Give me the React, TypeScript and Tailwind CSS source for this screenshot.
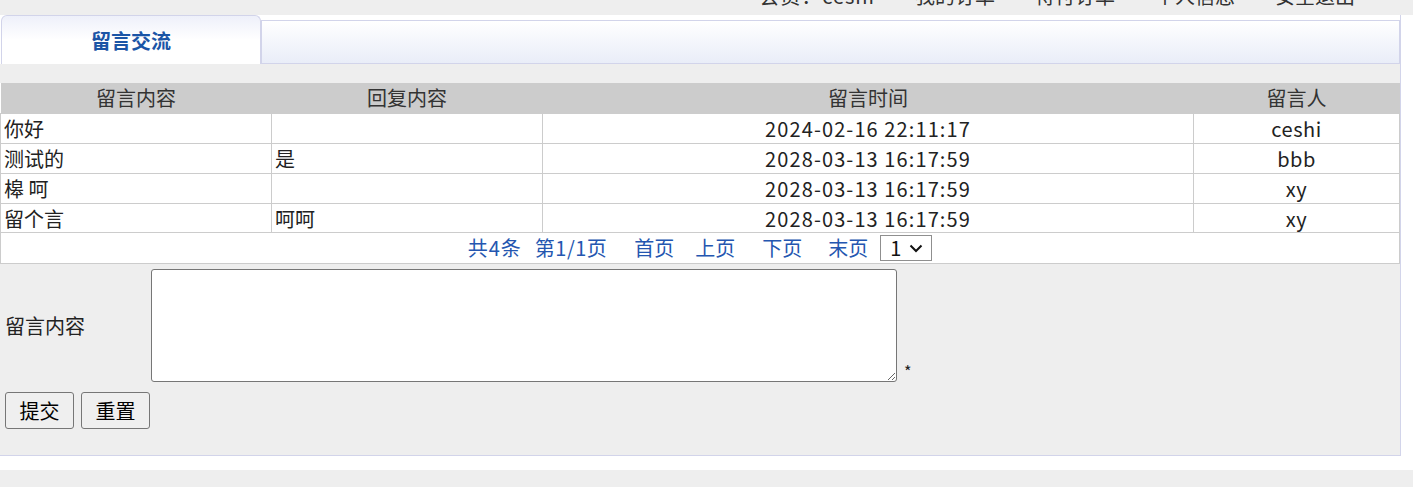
import React from "react";

const rows = [
  { c: "你好", r: "", t: "2024-02-16 22:11:17", u: "ceshi", h: "h-[30px]" },
  { c: "测试的", r: "是", t: "2028-03-13 16:17:59", u: "bbb", h: "h-[30px]" },
  { c: "槔 呵", r: "", t: "2028-03-13 16:17:59", u: "xy", h: "h-[30px]" },
  { c: "留个言", r: "呵呵", t: "2028-03-13 16:17:59", u: "xy", h: "h-[29px]" },
];

export default function App() {
  return (
    <div
      className="w-[1413px] h-[487px] bg-[#eeeeee] overflow-hidden text-[20px] text-[#222]"
      style={{ fontFamily: '"Noto Sans CJK SC", "Noto Sans", sans-serif' }}
    >
      {/* clipped top nav */}
      <div className="h-[15px] overflow-hidden">
        <div className="-mt-[15px] h-[22px] leading-[22px] flex justify-end pr-[58px] gap-[40px] text-[#333]">
          <span className="tracking-[1px]">会员：ceshi</span>
          <span>我的订单</span>
          <span>待付订单</span>
          <span>个人信息</span>
          <span>安全退出</span>
        </div>
      </div>

      <div className="bg-white pb-[14px]">
        <div className="w-[1401px] bg-[#eeeeee] border-r border-b border-[#d2d4ea]">
          {/* tab row */}
          <div className="h-[49px] bg-white flex">
            <div className="ml-[1px] w-[260px] h-[49px] border border-b-0 border-[#d2d4ea] rounded-t-[6px] bg-gradient-to-b from-[#eef0fa] via-white to-white flex items-center justify-center">
              <span className="font-bold text-[#1b55a6] text-[20px] leading-none mt-[2px]">留言交流</span>
            </div>
            <div className="flex-1 mt-[5px] h-[44px] border border-[#d2d4ea] bg-gradient-to-b from-white to-[#e9edf8]" />
          </div>

          <div className="h-[19px]" />

          <table className="w-[1399px] border-collapse bg-white table-fixed">
            <colgroup>
              <col className="w-[271px]" />
              <col className="w-[271px]" />
              <col className="w-[651px]" />
              <col className="w-[206px]" />
            </colgroup>
            <thead>
              <tr className="bg-[#cccccc] text-[#333]">
                <th className="font-normal h-[30px] leading-[30px] p-0">留言内容</th>
                <th className="font-normal h-[30px] leading-[30px] p-0">回复内容</th>
                <th className="font-normal h-[30px] leading-[30px] p-0">留言时间</th>
                <th className="font-normal h-[30px] leading-[30px] p-0">留言人</th>
              </tr>
            </thead>
            <tbody>
              {rows.map((r, i) => (
                <tr key={i}>
                  <td className={`border border-[#cccccc] ${r.h} px-[3px] py-0 leading-[27px] text-left`}>{r.c}</td>
                  <td className={`border border-[#cccccc] ${r.h} px-[3px] py-0 leading-[27px] text-left`}>{r.r}</td>
                  <td className={`border border-[#cccccc] ${r.h} p-0 leading-[27px] text-center tracking-[1.1px]`}>{r.t}</td>
                  <td className={`border border-[#cccccc] ${r.h} p-0 leading-[27px] text-center tracking-[0.5px]`}>{r.u}</td>
                </tr>
              ))}
              <tr>
                <td colSpan={4} className="border border-[#cccccc] h-[31px] p-0">
                  <div className="flex items-center justify-center h-[29px] text-[#2456b0]">
                    <span className="tracking-[1px]">共4条</span>
                    <span className="ml-[13px] tracking-[0.5px]">第1/1页</span>
                    <span className="ml-[27px]">首页</span>
                    <span className="ml-[21px]">上页</span>
                    <span className="ml-[27px]">下页</span>
                    <span className="ml-[26px]">末页</span>
                    <span className="ml-[12px] w-[52px] h-[26px] border border-[#8f8f8f] bg-white flex items-center pl-[9px] text-[#111]">
                      <span className="leading-none">1</span>
                      <svg className="ml-[8px]" width="14" height="9" viewBox="0 0 14 9">
                        <path d="M1.5 1.5 L7 7 L12.5 1.5" fill="none" stroke="#111" strokeWidth="2" />
                      </svg>
                    </span>
                  </div>
                </td>
              </tr>
            </tbody>
          </table>

          {/* form */}
          <div className="flex items-center pt-[5px]">
            <div className="w-[151px] pl-[5px]">留言内容</div>
            <div className="flex items-end">
              <textarea className="w-[746px] h-[113px] border border-[#767676] rounded-[3px] bg-white block resize-y" />
              <span className="ml-[7px] text-[16px] leading-none mb-[3px] text-[#222]">*</span>
            </div>
          </div>
          <div className="flex gap-[7px] pl-[5px] pt-[10px] pb-[26px]">
            <button className="w-[69px] h-[37px] border border-[#767676] rounded-[3px] bg-[#efefef] text-[20px] text-black leading-none">
              提交
            </button>
            <button className="w-[69px] h-[37px] border border-[#767676] rounded-[3px] bg-[#efefef] text-[20px] text-black leading-none">
              重置
            </button>
          </div>
        </div>
      </div>
    </div>
  );
}
